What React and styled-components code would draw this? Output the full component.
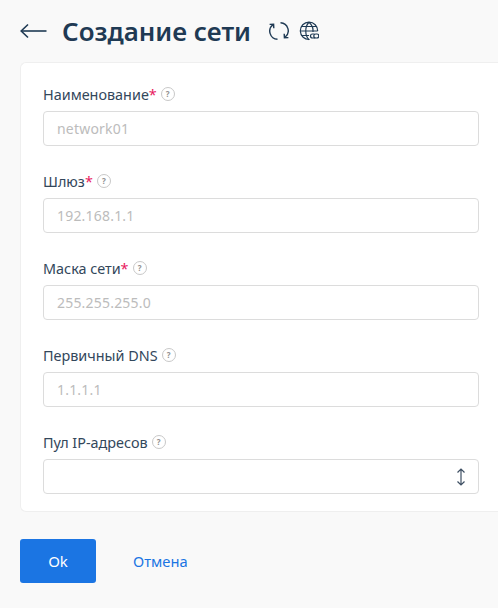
import React from 'react';
import styled, { createGlobalStyle } from 'styled-components';

const Global = createGlobalStyle`
  html, body { margin: 0; padding: 0; background: #f9f9f9; overflow: hidden; }
  body { font-family: "Noto Sans", "Open Sans", sans-serif; }
`;

const Page = styled.div`
  width: 498px;
  height: 608px;
  background: #f9f9f9;
  display: flex;
  flex-direction: column;
  box-sizing: border-box;
  padding: 12px 0 0 20px;
`;
const Header = styled.header`
  display: flex;
  align-items: center;
  height: 38px;
`;
const Back = styled.button`
  border: 0;
  background: none;
  padding: 0;
  width: 27px;
  height: 20px;
  margin-right: 15px;
  color: #1f3a54;
  display: flex;
`;
const Title = styled.h1`
  margin: 0 18px 0 0;
  font-size: 25.9px;
  line-height: 38px;
  font-weight: 600;
  color: #1f3a54;
`;
const HeaderIcons = styled.div`
  display: flex;
  align-items: center;
  gap: 10px;
  color: #1f3a54;
  margin-top: -1px;
`;
const Card = styled.section`
  margin-top: 12px;
  height: 450px;
  box-sizing: border-box;
  background: #fff;
  border: 1px solid #efefef;
  border-right: 0;
  border-radius: 6px 0 0 6px;
  padding: 19px 19px 0 22px;
  display: flex;
  flex-direction: column;
  gap: 23px;
`;
const Field = styled.div`
  display: flex;
  flex-direction: column;
  gap: 5px;
`;
const LabelRow = styled.div`
  display: flex;
  align-items: center;
  height: 24px;
  font-size: 14.4px;
  color: #33475b;
`;
const Required = styled.span`
  color: #e8175d;
`;
const Help = styled.span`
  width: 14px;
  height: 14px;
  margin-left: 4px;
  box-sizing: border-box;
  border: 1px solid #c8c8c8;
  border-radius: 50%;
  color: #8f8f8f;
  font-size: 8px;
  font-weight: 700;
  line-height: 12px;
  text-align: center;
`;
const Input = styled.div`
  height: 35px;
  box-sizing: border-box;
  border: 1px solid #dcdcdc;
  border-radius: 4px;
  background: #fff;
  padding: 0 13px;
  display: flex;
  align-items: center;
  font-size: 14px;
  letter-spacing: 0.2px;
  color: #bcbcbc;
`;
const SelectIcon = styled.span`
  display: flex;
  margin-left: auto;
  margin-right: -1px;
  color: #3f5064;
`;
const Footer = styled.footer`
  margin-top: 27px;
  display: flex;
  align-items: center;
`;
const OkButton = styled.button`
  width: 76px;
  height: 44px;
  border: 0;
  border-radius: 3px;
  background: #1b75e3;
  color: #fff;
  font: 15px "Noto Sans", sans-serif;
`;
const CancelButton = styled.button`
  border: 0;
  background: none;
  margin-left: 37px;
  padding: 0;
  color: #1b75e3;
  font: 14.7px "Noto Sans", sans-serif;
`;

const fields = [
  { label: 'Наименование', required: true, placeholder: 'network01' },
  { label: 'Шлюз', required: true, placeholder: '192.168.1.1' },
  { label: 'Маска сети', required: true, placeholder: '255.255.255.0' },
  { label: 'Первичный DNS', placeholder: '1.1.1.1' },
  { label: 'Пул IP-адресов', select: true },
];

export default function App() {
  return (
    <Page>
      <Global />
      <Header>
        <Back aria-label="Назад">
          <svg width="27" height="20" viewBox="0 0 27 20" fill="none" stroke="currentColor" strokeWidth="1.6">
            <path d="M1 10h25.5" />
            <path d="M8 3.5 1.2 10 8 16.5" />
          </svg>
        </Back>
        <Title>Создание сети</Title>
        <HeaderIcons>
          <svg width="20" height="20" viewBox="0 0 20 20" fill="none" stroke="currentColor" strokeWidth="1.4">
            <path d="M8.5 18.2A8 8 0 0 1 4 3.8" />
            <path d="M0.6 3.4 4.6 3.2 4.8 7.2" />
            <path d="M11.5 1.8A8 8 0 0 1 16 16.2" />
            <path d="M19.4 16.6 15.4 16.8 15.2 12.8" />
          </svg>
          <svg width="20" height="20" viewBox="0 0 20 20" fill="none" stroke="currentColor" strokeWidth="1.2">
            <path d="M10.5 18.5A8.7 8.7 0 1 1 18.7 10" />
            <path d="M1.3 10h17.4M2.3 5.5h15.4M2.3 14.5h7.7" />
            <path d="M10 1.3C5.7 5.5 5.7 14.5 10 18.7M10 1.3c3.3 3 4.4 6.5 4 9.7" />
            <rect x="11.5" y="13" width="5" height="4" rx="2" fill="#f9f9f9" />
            <rect x="14.8" y="13" width="5" height="4" rx="2" fill="#f9f9f9" />
          </svg>
        </HeaderIcons>
      </Header>
      <Card>
        {fields.map((f) => (
          <Field key={f.label}>
            <LabelRow>
              {f.label}
              {f.required && <Required>*</Required>}
              <Help>?</Help>
            </LabelRow>
            <Input>
              {f.placeholder}
              {f.select && (
                <SelectIcon>
                  <svg width="10" height="18" viewBox="0 0 10 18" fill="none" stroke="currentColor" strokeWidth="1.2">
                    <path d="M5 1v16M1.5 4.5 5 1l3.5 3.5M1.5 13.5 5 17l3.5-3.5" />
                  </svg>
                </SelectIcon>
              )}
            </Input>
          </Field>
        ))}
      </Card>
      <Footer>
        <OkButton>Ok</OkButton>
        <CancelButton>Отмена</CancelButton>
      </Footer>
    </Page>
  );
}
